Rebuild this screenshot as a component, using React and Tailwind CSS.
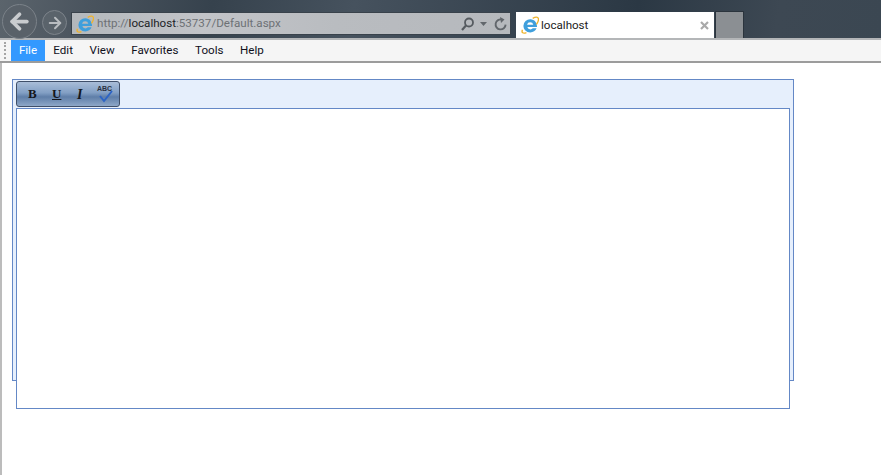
import { ArrowLeft, ArrowRight } from 'lucide-react';

function IeIcon({ size = 18 }) {
  return (
    <svg width={size} height={size} viewBox="0 0 20 20" className="shrink-0">
      <path d="M10.5 3.5a7.5 7.5 0 0 0-7.8 7.3c0 4.2 3.4 7.4 7.6 7.4 3.2 0 5.9-1.7 7-4.5h-4.2a3.4 3.4 0 0 1-6-1.6h10.7c.3-4.6-3-8.6-7.3-8.6zM6.7 9.6a3.6 3.6 0 0 1 7 0z" fill="#3f9fdc" fillRule="evenodd" />
      <path d="M1.6 15.2C.2 18.6 2.5 20 6 18.4M13 2.6c3-1.6 6-2 6.4.6.3 1.8-.8 4-2.2 6" fill="none" stroke="#eeb32c" strokeWidth="1.5" />
    </svg>
  );
}

const menus = ['Edit', 'View', 'Favorites', 'Tools', 'Help'];

export default function App() {
  return (
    <div className="h-[475px] w-[881px] overflow-hidden bg-white font-['Roboto','Noto_Sans',sans-serif] text-black">
      {/* window chrome */}
      <div className="flex h-[38px] bg-[linear-gradient(100deg,#5b646c_0%,#4a545e_10%,#36424d_24%,#46525e_40%,#2b3844_72%,#3d4853_88%,#3b4752_100%)]">
        <div className="ml-[2px] mt-[4px] flex h-[35px] w-[35px] shrink-0 items-center justify-center rounded-full border border-[#7b8289] bg-[#596169]">
          <ArrowLeft size={25} strokeWidth={3.6} className="text-[#c9cccf]" />
        </div>
        <div className="ml-[5px] mt-[10px] flex h-[25px] w-[25px] shrink-0 items-center justify-center rounded-full border border-[#7d848b] bg-[#5a636b]">
          <ArrowRight size={18} strokeWidth={2.6} className="text-[#b9bdc1]" />
        </div>
        <div className="ml-[4px] mt-[12px] flex h-[23px] w-[440px] items-center border border-[#39424b] bg-[linear-gradient(90deg,#b4b8bc_0%,#c2c4c8_30%,#b9bcc0_60%,#b6b9bd_100%)] pl-[4px] pr-[2px]">
          <IeIcon />
          <div className="ml-[3px] flex-1 whitespace-nowrap text-[11.6px] leading-none text-[#6d7175]">
            http://<span className="text-[#202225]">localhost</span>:53737/Default.aspx
          </div>
          <svg width="48" height="16" viewBox="0 0 48 16" className="shrink-0">
            <circle cx="9" cy="6.5" r="4" fill="none" stroke="#565b60" strokeWidth="1.8" />
            <path d="M6 9.5 2 14" stroke="#565b60" strokeWidth="2.2" />
            <path d="M20 6h7l-3.5 4z" fill="#62676c" />
            <path d="M42 3.6a5 5 0 1 0 3.6 5" fill="none" stroke="#62676c" strokeWidth="1.9" />
            <path d="M40 1l4.5 2.6L41 7z" fill="#62676c" />
          </svg>
        </div>
        <div className="ml-[5px] mt-[12px] flex h-[26px] w-[198px] items-center bg-white pl-[5px] pr-[5px]">
          <IeIcon />
          <span className="ml-[2px] flex-1 pt-[2px] text-[11.6px] text-[#1c1c1c]">localhost</span>
          <svg width="9" height="9" viewBox="0 0 9 9">
            <path d="M1 1l7 7M8 1l-7 7" stroke="#a9a9a9" strokeWidth="2.2" />
          </svg>
        </div>
        <div className="ml-[1px] mt-[11px] h-[27px] w-[29px] border-x border-t border-[#2b343d] bg-[#8b8f93]" />
      </div>

      {/* menu bar */}
      <div className="flex h-[25px] items-stretch border-t-2 border-[#b4b6b8] border-b-2 border-b-[#9c9c9c] bg-[#f5f5f5] text-[11.6px]">
        <div className="ml-[4px] h-[17px] w-[3px] self-center border-l-2 border-dotted border-[#a5a5a5]" />
        <div className="ml-[4px] flex w-[34px] items-center justify-center bg-[#3399ff] text-white">File</div>
        {menus.map((m) => (
          <div key={m} className="flex items-center px-[8.3px] text-[#10101c]">{m}</div>
        ))}
      </div>

      {/* page */}
      <div className="h-[412px] border-l-2 border-[#bcbcbc] pl-[10px] pt-[16px]">
        <div className="h-[302px] w-[782px] border border-[#6488c6] bg-[#e6effc] pl-[3px] pt-[1px]">
          <div className="flex h-[26px] w-[104px] items-center rounded-[3px] border border-[#3f4f69] bg-[linear-gradient(180deg,#a9bdd8_0%,#829fc4_45%,#5f7ea8_62%,#8ea7c8_100%)] pl-[11px] font-['Liberation_Serif',serif] text-[13px] font-bold text-[#15171c]">
            <span className="w-[24px]">B</span>
            <span className="w-[23px] underline">U</span>
            <span className="w-[22px] pl-[2px] text-[14px] italic">I</span>
            <div className="relative h-[20px] w-[20px]">
              <span className="absolute left-0 top-[1px] font-['Liberation_Sans',sans-serif] text-[7px] leading-none text-[#2b3140]">ABC</span>
              <svg width="20" height="20" viewBox="0 0 20 20" className="absolute left-0 top-0">
                <path d="M3 12l4 5L15 7" fill="none" stroke="#2d64c4" strokeWidth="2" />
              </svg>
            </div>
          </div>
          <div className="mt-[1px] h-[301px] w-[774px] border border-[#6488c6] bg-white" />
        </div>
      </div>
    </div>
  );
}
